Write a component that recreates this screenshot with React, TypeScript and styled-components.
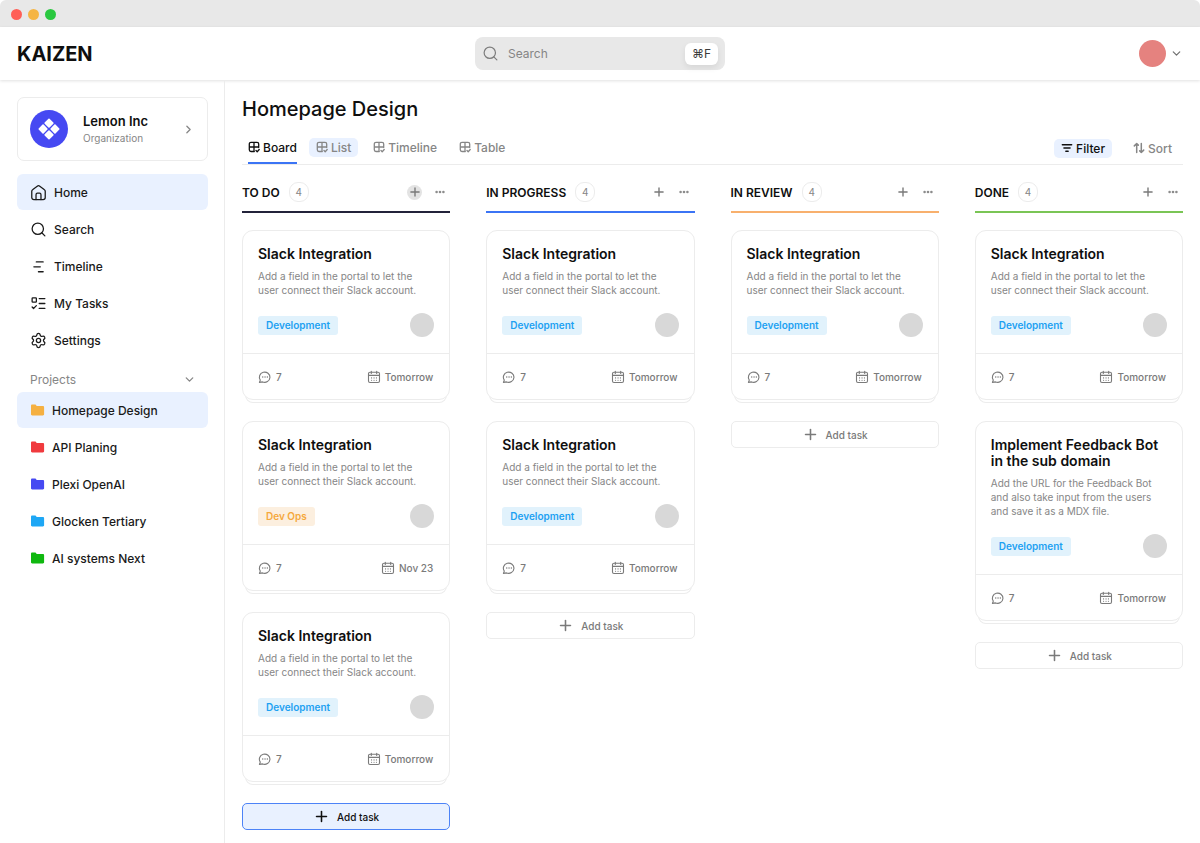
import React from "react";
import styled, { createGlobalStyle } from "styled-components";
import { ChevronDown, ChevronRight, ListTodo, Plus, Search, Settings } from "lucide-react";

const GlobalStyle = createGlobalStyle`
  *, *::before, *::after { box-sizing: border-box; }
  body {
    margin: 0;
    background: #fff;
    color: #0f0f0f;
    font-family: Inter, "Liberation Sans", sans-serif;
    font-size: 12px;
  }
  button, input {
    font: inherit;
    color: inherit;
    margin: 0;
    padding: 0;
    border: 0;
    background: none;
  }
  button { cursor: pointer; }
  h1, h2, h3, p, ul { margin: 0; padding: 0; }
  ul { list-style: none; }
  a { color: inherit; text-decoration: none; }
  svg { display: block; flex: none; }
`;

const muted = "#868686";
const line = "#ececec";
const tint = "#e9f1ff";

const Shell = styled.div`
  display: flex;
  flex-direction: column;
  min-height: 100vh;
`;

const TitleBar = styled.div`
  display: flex;
  align-items: center;
  gap: 6px;
  height: 27px;
  padding: 1px 11px 0;
  background: #e8e8e8;
  border-radius: 6px 6px 0 0;
`;

const Light = styled.span<{ $color: string }>`
  width: 11px;
  height: 11px;
  border-radius: 50%;
  background: ${(p) => p.$color};
`;

const Header = styled.header`
  display: grid;
  grid-template-columns: 1fr 250px 1fr;
  align-items: center;
  height: 53px;
  padding: 0 17px;
  box-shadow: 0 1px 3px rgba(0, 0, 0, 0.12);
`;

const Logo = styled.div`
  font-size: 20px;
  font-weight: 700;
`;

const SearchBox = styled.label`
  display: flex;
  align-items: center;
  gap: 9px;
  height: 33px;
  padding: 0 7px;
  border-radius: 8px;
  background: #e8e8e8;
  color: #7d7d7d;
`;

const SearchInput = styled.input`
  flex: 1;
  min-width: 0;
  font-size: 12px;
  outline: none;
  &::placeholder { color: #858585; opacity: 1; }
`;

const Shortcut = styled.kbd`
  display: grid;
  place-items: center;
  width: 33px;
  height: 22px;
  border-radius: 6px;
  background: #fff;
  box-shadow: 0 3px 6px rgba(0, 0, 0, 0.08);
  color: #3c3c3c;
  font-family: inherit;
  font-size: 12px;
`;

const Account = styled.button`
  display: flex;
  align-items: center;
  gap: 4px;
  justify-self: end;
  color: #6f6f6f;
`;

const Avatar = styled.span<{ $size: number; $color: string }>`
  width: ${(p) => p.$size}px;
  height: ${(p) => p.$size}px;
  border-radius: 50%;
  background: ${(p) => p.$color};
`;

const Body = styled.div`
  display: flex;
  flex: 1;
`;

const Sidebar = styled.aside`
  flex: none;
  width: 225px;
  padding: 17px 16px 17px 17px;
  border-right: 1px solid ${line};
`;

const OrgCard = styled.button`
  display: flex;
  align-items: center;
  width: 100%;
  height: 64px;
  padding: 0 12px;
  border: 1px solid ${line};
  border-radius: 7px;
  text-align: left;
  color: ${muted};
`;

const OrgText = styled.span`
  display: flex;
  flex-direction: column;
  flex: 1;
  gap: 1px;
  margin-left: 15px;
  font-size: 10px;
  line-height: 15px;
`;

const OrgName = styled.span`
  color: #0f0f0f;
  font-size: 13px;
  line-height: 17px;
  font-weight: 600;
`;

const NavList = styled.ul`
  display: flex;
  flex-direction: column;
  gap: 1px;
`;

const MainNav = styled.nav`
  margin-top: 13px;
`;

const NavLink = styled.a<{ $active?: boolean }>`
  display: flex;
  align-items: center;
  gap: 7px;
  height: 36px;
  padding: 0 13px;
  border-radius: 6px;
  background: ${(p) => (p.$active ? tint : "transparent")};
  color: #1a1a1a;
  font-size: 12px;
  font-weight: 500;
`;

const GroupToggle = styled.button`
  display: flex;
  align-items: center;
  justify-content: space-between;
  width: 100%;
  height: 25px;
  margin-top: 9px;
  padding: 0 12px 0 13px;
  color: ${muted};
  font-size: 12px;
`;

const Main = styled.main`
  flex: 1;
  min-width: 0;
  padding: 15px 17px 13px;
`;

const PageTitle = styled.h1`
  font-size: 20px;
  line-height: 28px;
  font-weight: 500;
`;

const Toolbar = styled.div`
  display: flex;
  justify-content: space-between;
  height: 42px;
  border-bottom: 1px solid ${line};
`;

const Tabs = styled.div`
  display: flex;
  align-items: flex-end;
  gap: 8px;
  padding-left: 6px;
`;

const Tab = styled.button<{ $active?: boolean }>`
  height: 32px;
  margin-right: ${(p) => (p.$active ? 4 : 0)}px;
  border-bottom: 2px solid ${(p) => (p.$active ? "#3b74f5" : "transparent")};
  color: ${(p) => (p.$active ? "#0f0f0f" : muted)};
  font-weight: 500;
`;

const Chip = styled.span<{ $tinted?: boolean; $pad: number }>`
  display: flex;
  align-items: center;
  gap: 3px;
  height: 19px;
  padding: 0 ${(p) => p.$pad}px;
  border-radius: 5px;
  background: ${(p) => (p.$tinted ? tint : "transparent")};
`;

const Actions = styled.div`
  display: flex;
  align-items: center;
  gap: 14px;
  padding-top: 9px;
  padding-right: 4px;
`;

const ActionButton = styled.button<{ $active?: boolean }>`
  color: ${(p) => (p.$active ? "#0f0f0f" : muted)};
  font-weight: 500;
`;

const Board = styled.div`
  display: grid;
  grid-template-columns: repeat(4, minmax(0, 1fr));
  align-items: start;
  gap: 36px;
  margin-top: 16px;
`;

const ColumnBox = styled.section`
  display: flex;
  flex-direction: column;
  gap: 17px;
`;

const ColumnHeader = styled.header<{ $color: string }>`
  display: flex;
  align-items: center;
  height: 32px;
  padding: 0 3px 8px 0;
  border-bottom: 2px solid ${(p) => p.$color};
`;

const ColumnTitle = styled.h2`
  font-size: 12px;
  font-weight: 600;
`;

const Count = styled.span`
  display: grid;
  place-items: center;
  width: 20px;
  height: 20px;
  margin: 0 auto 0 9px;
  border: 1px solid ${line};
  border-radius: 9px;
  color: ${muted};
  font-size: 10px;
`;

const IconButton = styled.button<{ $filled?: boolean }>`
  display: grid;
  place-items: center;
  width: 15px;
  height: 15px;
  border-radius: 50%;
  background: ${(p) => (p.$filled ? "#e3e3e3" : "transparent")};
  color: #7a7a7a;
  & + & { margin-left: 10px; }
`;

const CardBox = styled.article`
  margin-bottom: 4px;
  border: 1px solid ${line};
  border-radius: 11px;
  background: #fff;
  box-shadow: 0 6px 0 -4px #fff, 0 6px 0 -3px ${line};
`;

const CardBody = styled.div`
  padding: 15px 15px 16px;
`;

const CardTitle = styled.h3`
  font-size: 14px;
  line-height: 16px;
  font-weight: 600;
`;

const CardText = styled.p`
  margin: 7px 0 16px;
  color: ${muted};
  font-size: 10px;
  line-height: 14px;
`;

const CardRow = styled.div`
  display: flex;
  align-items: center;
  justify-content: space-between;
`;

const Tag = styled.span<{ $warm?: boolean }>`
  padding: 0 8px;
  border-radius: 3px;
  background: ${(p) => (p.$warm ? "#fcefdf" : "#e1f2fc")};
  color: ${(p) => (p.$warm ? "#f5a83c" : "#1da1f2")};
  font-size: 10px;
  line-height: 19px;
  font-weight: 600;
`;

const CardFooter = styled.footer`
  display: flex;
  align-items: center;
  justify-content: space-between;
  height: 46px;
  padding: 0 16px 0 15px;
  border-top: 1px solid ${line};
  color: #7a7a7a;
  font-size: 10px;
  font-weight: 500;
`;

const Meta = styled.span`
  display: flex;
  align-items: center;
  gap: 4px;
`;

const AddTask = styled.button<{ $active?: boolean }>`
  display: flex;
  align-items: center;
  justify-content: center;
  gap: 7px;
  height: 27px;
  border: 1px solid ${(p) => (p.$active ? "#4d83f7" : line)};
  border-radius: 5px;
  background: ${(p) => (p.$active ? tint : "#fff")};
  color: ${(p) => (p.$active ? "#0f0f0f" : "#7a7a7a")};
  font-size: 10px;
  font-weight: 500;
`;

const stroke = {
  fill: "none",
  stroke: "currentColor",
  strokeLinecap: "round" as const,
  strokeLinejoin: "round" as const,
};

const HomeIcon = () => (
  <svg width="17" height="17" viewBox="0 0 24 24" {...stroke} strokeWidth="1.8">
    <path d="M2.500 10.300c0-.9.4-1.700 1.100-2.200l6.600-5a3 3 0 0 1 3.600 0l6.600 5c.7.5 1.100 1.300 1.100 2.200V19a3 3 0 0 1-3 3H5.500a3 3 0 0 1-3-3z" />
    <path d="M8.500 22v-7a2 2 0 0 1 2-2h3a2 2 0 0 1 2 2v7" />
  </svg>
);

const TimelineIcon = () => (
  <svg width="17" height="17" viewBox="0 0 24 24" {...stroke} strokeWidth="2">
    <path d="M9 5.500h9.500M5.500 12.500h9M12 19.500h6.500" />
  </svg>
);

const FolderIcon = ({ color }: { color: string }) => (
  <svg width="15" height="12" viewBox="0 0 15 12" fill={color}>
    <path d="M1 1.800C1 1.100 1.500.6 2.200.6h3c.5 0 .8.2 1 .6l.4.9h6.200c.8 0 1.300.5 1.300 1.200v6.900c0 .7-.5 1.200-1.200 1.200H2.200c-.7 0-1.200-.5-1.200-1.200z" />
  </svg>
);

const GridIcon = () => (
  <svg width="12" height="12" viewBox="0 0 12 12" {...stroke} strokeWidth="1.300">
    <path d="M6.300 10.500H3A1.700 1.700 0 0 1 1.300 8.800V3A1.700 1.700 0 0 1 3 1.300h6A1.700 1.700 0 0 1 10.700 3v3.600M1.300 6h9.400M6 1.300v9.200M8 9.500l1.200 1.200 2-2.200" />
  </svg>
);

const FilterIcon = () => (
  <svg width="12" height="12" viewBox="0 0 12 12" {...stroke} strokeWidth="1.600">
    <path d="M1.400 2.700h9.200M3 6h6M4.900 9.300h2.200" />
  </svg>
);

const SortIcon = () => (
  <svg width="12" height="12" viewBox="0 0 12 12" {...stroke} strokeWidth="1.500">
    <path d="M3.700 10.500v-9M1.300 3.900l2.400-2.400L5.300 3.100M8.300 1.500v9M6.700 8.900l1.600 1.600 2.400-2.400" />
  </svg>
);

const DotsIcon = () => (
  <svg width="10" height="4" viewBox="0 0 10 4" fill="#8c8c8c">
    <circle cx="1.600" cy="2" r="1.300" />
    <circle cx="5" cy="2" r="1.300" />
    <circle cx="8.400" cy="2" r="1.300" />
  </svg>
);

const CommentIcon = () => (
  <svg width="14" height="14" viewBox="0 0 14 14" {...stroke} strokeWidth="1.100">
    <path d="M1.400 12.400l.9-2.300A5.300 5.100 0 1 1 4.600 11.900z" />
    <path d="M4.700 7h.1M7 7h.1M9.300 7h.1" strokeWidth="1.300" />
  </svg>
);

const CalendarIcon = () => (
  <svg width="14" height="14" viewBox="0 0 14 14" {...stroke} strokeWidth="1.100">
    <rect x="1.500" y="2.300" width="11" height="10.200" rx="1.500" />
    <path d="M1.500 5.400h11M4.300 1.200v2.200M9.700 1.200v2.200" />
    <path d="M4.500 7.900h.1M7 7.900h.1M9.400 7.900h.1M4.500 10.200h.1M7 10.200h.1M9.400 10.200h.1" />
  </svg>
);

const OrgLogo = () => (
  <svg width="38" height="38" viewBox="0 0 38 38">
    <circle cx="19" cy="19" r="19" fill="#4649f2" />
    <g fill="#fff" transform="rotate(45 19 19)">
      <rect x="11.300" y="11.300" width="7" height="7" rx=".8" />
      <rect x="19.700" y="11.300" width="7" height="7" rx=".8" />
      <rect x="11.300" y="19.700" width="7" height="7" rx=".8" />
      <rect x="19.700" y="19.700" width="7" height="7" rx=".8" />
    </g>
  </svg>
);

const navItems = [
  { label: "Home", icon: <HomeIcon /> },
  { label: "Search", icon: <Search size={17} strokeWidth={1.8} /> },
  { label: "Timeline", icon: <TimelineIcon /> },
  { label: "My Tasks", icon: <ListTodo size={17} strokeWidth={1.8} /> },
  { label: "Settings", icon: <Settings size={17} strokeWidth={1.8} /> },
];

const projects = [
  { label: "Homepage Design", color: "#f5b041" },
  { label: "API Planing", color: "#f03a3e" },
  { label: "Plexi OpenAI", color: "#4649f2" },
  { label: "Glocken Tertiary", color: "#1ea7f5" },
  { label: "AI systems Next", color: "#0fb80f" },
];

type Task = { title: string; text: string; tag: string; due: string };

const slack: Task = {
  title: "Slack Integration",
  text: "Add a field in the portal to let the user connect their Slack account.",
  tag: "Development",
  due: "Tomorrow",
};

const feedback: Task = {
  title: "Implement Feedback Bot in the sub domain",
  text: "Add the URL for the Feedback Bot and also take input from the users and save it as a MDX file.",
  tag: "Development",
  due: "Tomorrow",
};

const columns = [
  { title: "TO DO", color: "#23233a", tasks: [slack, { ...slack, tag: "Dev Ops", due: "Nov 23" }, slack], active: true },
  { title: "IN PROGRESS", color: "#3b74f5", tasks: [slack, slack] },
  { title: "IN REVIEW", color: "#f8b06d", tasks: [slack] },
  { title: "DONE", color: "#7ac555", tasks: [slack, feedback] },
];

const TaskCard = ({ task }: { task: Task }) => (
  <CardBox>
    <CardBody>
      <CardTitle>{task.title}</CardTitle>
      <CardText>{task.text}</CardText>
      <CardRow>
        <Tag $warm={task.tag === "Dev Ops"}>{task.tag}</Tag>
        <Avatar $size={24} $color="#d8d8d8" />
      </CardRow>
    </CardBody>
    <CardFooter>
      <Meta><CommentIcon />7</Meta>
      <Meta><CalendarIcon />{task.due}</Meta>
    </CardFooter>
  </CardBox>
);

export default function App() {
  return (
    <Shell>
      <GlobalStyle />
      <TitleBar>
        <Light $color="#ff5f57" />
        <Light $color="#f5b544" />
        <Light $color="#2ac840" />
      </TitleBar>
      <Header>
        <Logo>KAIZEN</Logo>
        <SearchBox>
          <Search size={17} strokeWidth={1.7} />
          <SearchInput type="search" placeholder="Search" aria-label="Search" />
          <Shortcut>⌘F</Shortcut>
        </SearchBox>
        <Account aria-label="Account">
          <Avatar $size={27} $color="#e5827f" />
          <ChevronDown size={13} strokeWidth={2.2} />
        </Account>
      </Header>
      <Body>
        <Sidebar>
          <OrgCard>
            <OrgLogo />
            <OrgText>
              <OrgName>Lemon Inc</OrgName>
              Organization
            </OrgText>
            <ChevronRight size={13} strokeWidth={2.4} />
          </OrgCard>
          <MainNav>
            <NavList>
              {navItems.map((item, i) => (
                <li key={item.label}>
                  <NavLink href="#" $active={i === 0}>{item.icon}{item.label}</NavLink>
                </li>
              ))}
            </NavList>
          </MainNav>
          <GroupToggle>
            Projects
            <ChevronDown size={13} strokeWidth={2.4} />
          </GroupToggle>
          <NavList>
            {projects.map((project, i) => (
              <li key={project.label}>
                <NavLink href="#" $active={i === 0}>
                  <FolderIcon color={project.color} />
                  {project.label}
                </NavLink>
              </li>
            ))}
          </NavList>
        </Sidebar>
        <Main>
          <PageTitle>Homepage Design</PageTitle>
          <Toolbar>
            <Tabs role="tablist">
              <Tab role="tab" aria-selected $active><Chip $pad={0}><GridIcon />Board</Chip></Tab>
              {["List", "Timeline", "Table"].map((label) => (
                <Tab role="tab" key={label}>
                  <Chip $pad={7} $tinted={label === "List"}><GridIcon />{label}</Chip>
                </Tab>
              ))}
            </Tabs>
            <Actions>
              <ActionButton $active><Chip $pad={7} $tinted><FilterIcon />Filter</Chip></ActionButton>
              <ActionButton><Chip $pad={7}><SortIcon />Sort</Chip></ActionButton>
            </Actions>
          </Toolbar>
          <Board>
            {columns.map((column) => (
              <ColumnBox key={column.title}>
                <ColumnHeader $color={column.color}>
                  <ColumnTitle>{column.title}</ColumnTitle>
                  <Count>4</Count>
                  <IconButton aria-label={`Add to ${column.title}`} $filled={column.active}>
                    <Plus size={14} strokeWidth={2.4} />
                  </IconButton>
                  <IconButton aria-label={`${column.title} options`}>
                    <DotsIcon />
                  </IconButton>
                </ColumnHeader>
                {column.tasks.map((task, i) => (
                  <TaskCard key={i} task={task} />
                ))}
                <AddTask $active={column.active}>
                  <Plus size={17} strokeWidth={2.2} />
                  Add task
                </AddTask>
              </ColumnBox>
            ))}
          </Board>
        </Main>
      </Body>
    </Shell>
  );
}
